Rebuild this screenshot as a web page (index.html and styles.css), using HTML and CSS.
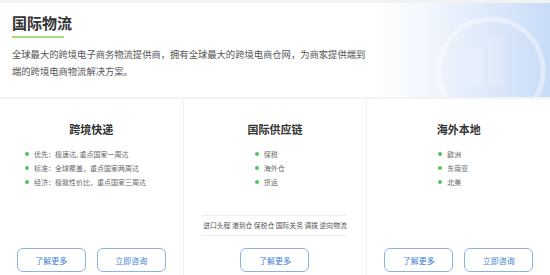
FILE: index.html
```html
<!DOCTYPE html>
<html lang="zh-CN">
<head>
    <meta charset="UTF-8">
    <title>国际物流</title>
    <link rel="stylesheet" href="styles.css">
</head>
<body>

    <div class="intro">
        <svg class="intro-globe" width="110" height="96" viewBox="0 0 110 96">
            <circle cx="55" cy="62" r="52" fill="none" stroke="#ffffff" stroke-opacity="0.4" stroke-width="5"/>
            <rect x="34" y="38" width="14" height="40" fill="#ffffff" fill-opacity="0.18"/>
            <rect x="52" y="28" width="16" height="50" fill="#ffffff" fill-opacity="0.15"/>
        </svg>
        <h1 class="intro-title">国际物流</h1>
        <p class="intro-text">全球最大的跨境电子商务物流提供商，拥有全球最大的跨境电商仓网，为商家提供端到端的跨境电商物流解决方案。</p>
    </div>

    <div class="services">

        <div class="service">
            <h2>跨境快递</h2>
            <ul class="points wide">
                <li>优先：极速达, 重点国家一周达</li>
                <li>标准：全球覆盖，重点国家两周达</li>
                <li>经济：极致性价比，重点国家三周达</li>
            </ul>
            <div class="actions">
                <button>了解更多</button>
                <button>立即咨询</button>
            </div>
        </div>

        <div class="service">
            <h2>国际供应链</h2>
            <ul class="points">
                <li>保税</li>
                <li>海外仓</li>
                <li>货运</li>
            </ul>
            <div class="tags">进口头程 港到仓 保税仓 国际关务 调拨 逆向物流</div>
            <div class="actions">
                <button>了解更多</button>
            </div>
        </div>

        <div class="service">
            <h2>海外本地</h2>
            <ul class="points">
                <li>欧洲</li>
                <li>东南亚</li>
                <li>北美</li>
            </ul>
            <div class="actions">
                <button>了解更多</button>
                <button>立即咨询</button>
            </div>
        </div>

    </div>

</body>
</html>
```

FILE: styles.css
```css
body {
    margin: 0;
    padding-top: 3px;
    background-color: #f1f2f4;
    font-family: "Noto Sans CJK SC", "Noto Sans", sans-serif;
    overflow: hidden;
}

.intro {
    position: relative;
    height: 94px;
    box-sizing: border-box;
    padding: 9px 12px 0;
    background: linear-gradient(to right, #ffffff 0%, #ffffff 68%, #f0f5fd 79%, #dbe8fa 90%, #c8dcf7 100%);
    overflow: hidden;
}

.intro-globe {
    position: absolute;
    right: 4px;
    top: 6px;
}

.intro-title {
    position: relative;
    margin: 0;
    font-size: 15px;
    line-height: 21px;
    font-weight: bold;
    color: #333;
}

.intro-title::after {
    content: "";
    display: block;
    width: 52px;
    height: 2px;
    margin-top: 3px;
    background-color: #a9dc7f;
}

.intro-text {
    position: relative;
    width: 360px;
    margin: 8px 0 0;
    font-size: 9.3px;
    line-height: 17px;
    color: #555;
}

.services {
    display: grid;
    grid-template-columns: 1fr 1fr 1fr;
    gap: 1px;
    margin-top: 2px;
}

.service {
    display: flex;
    flex-direction: column;
    height: 176px;
    box-sizing: border-box;
    padding: 22px 0 3px;
    background-color: #fff;
}

.service h2 {
    margin: 0;
    text-align: center;
    font-size: 11px;
    line-height: 16px;
    font-weight: bold;
    color: #333;
}

.points {
    list-style: none;
    margin: 10px 0 0 70px;
    padding: 0;
}

.points.wide {
    margin-left: 24px;
}

.points li {
    position: relative;
    padding-left: 10px;
    font-size: 7px;
    line-height: 14px;
    color: #666;
}

.points li::before {
    content: "";
    position: absolute;
    left: 1px;
    top: 5px;
    width: 4px;
    height: 4px;
    border-radius: 50%;
    background-color: #52c35e;
}

.tags {
    width: 145px;
    margin: 26px auto 0;
    border-top: 1px solid #eeeeee;
    border-bottom: 1px solid #eeeeee;
    font-size: 6.8px;
    line-height: 19px;
    text-align: center;
    white-space: nowrap;
    color: #555;
}

.actions {
    display: flex;
    justify-content: center;
    gap: 11px;
    margin-top: auto;
}

.actions button {
    width: 69px;
    height: 24px;
    padding: 0;
    font-family: inherit;
    font-size: 8px;
    color: #3d7fd6;
    background-color: #fff;
    border: 1px solid #8db3e6;
    border-radius: 6px;
}
```
